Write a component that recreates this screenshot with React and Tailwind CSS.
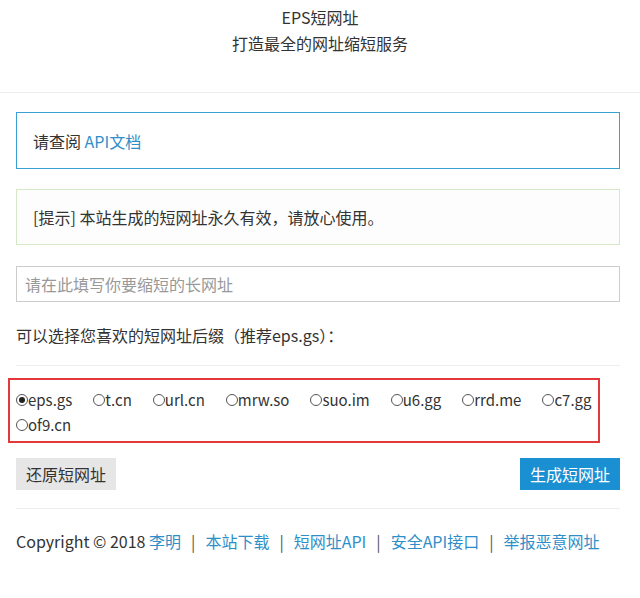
import { useState } from 'react';

const suffixes = ['eps.gs', 't.cn', 'url.cn', 'mrw.so', 'suo.im', 'u6.gg', 'rrd.me', 'c7.gg', 'of9.cn'];

const footerLinks = ['本站下载', '短网址API', '安全API接口', '举报恶意网址'];

export default function App() {
  const [picked, setPicked] = useState('eps.gs');

  return (
    <div className="min-h-[598px] bg-white text-[16px] text-[#333] font-['Noto_Sans_CJK_SC','Microsoft_YaHei',sans-serif]">
      <header className="h-[93px] border-b border-[#eee] flex flex-col items-center pt-[4px] leading-[26px]">
        <div>EPS短网址</div>
        <div>打造最全的网址缩短服务</div>
      </header>

      <main className="pl-4 pr-5 pt-[19px]">
        <div className="h-[57px] border border-[#3aa0d2] flex items-center px-4">
          请查阅&nbsp;<a href="#" className="text-[#2e8fc8]">API文档</a>
        </div>

        <div className="mt-[20px] h-[56px] border border-[#d6e9c6] bg-[#fdfdfd] flex items-center px-4">
          [提示] 本站生成的短网址永久有效，请放心使用。
        </div>

        <input
          className="mt-[21px] w-full h-[36px] border border-[#ccc] px-[8px] outline-none placeholder:text-[#999]"
          placeholder="请在此填写你要缩短的长网址"
        />

        <div className="mt-[20px] leading-[26px]">可以选择您喜欢的短网址后缀（推荐eps.gs）：</div>
        <div className="mt-[17px] border-t border-[#eee]"></div>
      </main>

      <div className="mx-2 mt-[12px] w-[592px] border-2 border-[#e3393c] pl-[6px] pr-0 pt-[7px] pb-[4px] flex flex-wrap gap-x-[21px] leading-[25px] text-[15px]">
        {suffixes.map((s) => (
          <label key={s} className="flex items-center cursor-pointer" onClick={() => setPicked(s)}>
            <span className="w-[12px] h-[12px] rounded-full border border-[#555] flex items-center justify-center">
              {picked === s && <span className="w-[6px] h-[6px] rounded-full bg-[#222]"></span>}
            </span>
            {s}
          </label>
        ))}
      </div>

      <div className="pl-4 pr-5 mt-[15px] flex justify-between">
        <button className="w-[100px] h-[32px] bg-[#e6e6e6] text-[#333]">还原短网址</button>
        <button className="w-[100px] h-[32px] bg-[#1a8fd2] text-white">生成短网址</button>
      </div>

      <footer className="ml-4 mr-5 mt-[18px] border-t border-[#eee] pt-[19px] leading-[26px]">
        Copyright © 2018 <a href="#" className="text-[#2e8fc8]">李明</a>
        {footerLinks.map((l) => (
          <span key={l}>
            <span className="mx-[10px] text-[#555]">|</span>
            <a href="#" className="text-[#2e8fc8]">{l}</a>
          </span>
        ))}
      </footer>
    </div>
  );
}
